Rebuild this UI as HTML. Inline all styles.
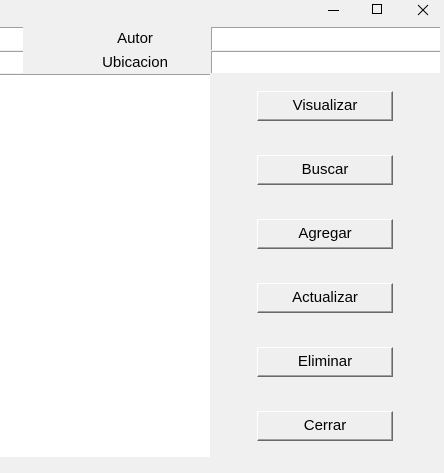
<html><head><style>
body{margin:0;width:444px;height:473px;background:#f0f0f0;position:relative;overflow:hidden;font-family:"Liberation Sans",sans-serif;font-size:15px}
div{position:absolute;box-sizing:border-box}
.f{background:#fff;border-top:1px solid #a0a0a0;border-left:1px solid #a0a0a0}
.l{color:#000;text-align:center;left:60px;width:150px}
.b{left:257px;width:136px;height:30px;background:#efefef;border:1px solid;border-color:#fff #696969 #696969 #fff;box-shadow:inset -1px -1px 0 #a0a0a0;text-align:center;line-height:28px}
</style></head><body>
<svg style="position:absolute;left:0;top:0" width="444" height="24"><line x1="328" y1="10.5" x2="339" y2="10.5" stroke="#000"/><rect x="372.5" y="4.5" width="9" height="9" fill="none" stroke="#000"/><line x1="418" y1="5" x2="428" y2="15" stroke="#000"/><line x1="428" y1="5" x2="418" y2="15" stroke="#000"/></svg>
<div class="f" style="left:-2px;top:27px;width:25px;height:23px"></div>
<div class="f" style="left:-2px;top:51px;width:25px;height:22px"></div>
<div class="l" style="top:30px">Autor</div>
<div class="l" style="top:54px">Ubicacion</div>
<div class="f" style="left:211px;top:27px;width:229px;height:23px"></div>
<div class="f" style="left:211px;top:51px;width:229px;height:22px"></div>
<div style="left:0;top:74px;width:210px;height:383px;background:#fff;border-top:1px solid #a0a0a0"></div>
<div class="b" style="top:91px">Visualizar</div>
<div class="b" style="top:155px">Buscar</div>
<div class="b" style="top:219px">Agregar</div>
<div class="b" style="top:283px">Actualizar</div>
<div class="b" style="top:347px">Eliminar</div>
<div class="b" style="top:411px">Cerrar</div>
</body></html>
